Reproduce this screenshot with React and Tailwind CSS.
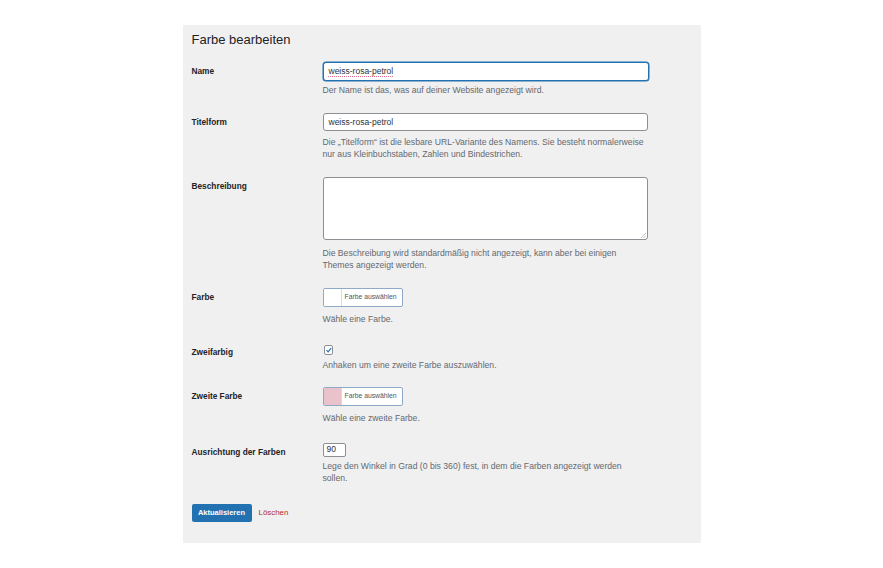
const font = { fontFamily: '"Liberation Sans", Arial, sans-serif' };

const Label = ({ children, className = '' }) => (
  <div className={`w-[131px] shrink-0 text-[8.3px] font-bold leading-[19px] text-[#1d2327] ${className}`}>
    {children}
  </div>
);

const Desc = ({ children, className = '' }) => (
  <p className={`text-[8.65px] leading-[12px] text-[#646970] ${className}`}>{children}</p>
);

const ColorButton = ({ swatch }) => (
  <button className="flex h-[18.5px] w-[80px] items-stretch overflow-hidden rounded-[2px] border border-[#8fa9c9] bg-white">
    <span className={`w-[18px] border-r border-[#d5dbe3] ${swatch}`}></span>
    <span className="flex flex-1 items-center pl-[3px] text-[6.8px] text-[#50575e]">Farbe auswählen</span>
  </button>
);

const App = () => {
  return (
    <div className="min-h-[568px] bg-white" style={font}>
      <div className="mx-auto mt-[25px] h-[518px] w-[518px] bg-[#f0f0f1] pl-[9px] pt-[6px]">
        <h1 className="text-[13px] leading-[17px] text-[#1d2327]">Farbe bearbeiten</h1>

        {/* Name */}
        <div className="mt-[14px] flex">
          <Label>Name</Label>
          <div>
            <div className="flex h-[19px] w-[326px] items-center rounded-[3px] border border-[#2271b1] bg-white pl-[5px] text-[8.5px] text-[#2c3338] shadow-[0_0_0_0.5px_#2271b1]">
              <span className="underline decoration-[#e06a8a] decoration-dotted underline-offset-2">weiss-rosa-petrol</span>
            </div>
            <Desc className="mt-[2.5px]">Der Name ist das, was auf deiner Website angezeigt wird.</Desc>
          </div>
        </div>

        {/* Titelform */}
        <div className="mt-[17.5px] flex">
          <Label>Titelform</Label>
          <div>
            <div className="flex h-[18px] w-[325px] items-center rounded-[3px] border border-[#8c8f94] bg-white pl-[5px] text-[8.5px] text-[#2c3338]">
              weiss-rosa-petrol
            </div>
            <Desc className="mt-[4.5px] w-[325px]">
              Die „Titelform“ ist die lesbare URL-Variante des Namens. Sie besteht normalerweise nur aus Kleinbuchstaben, Zahlen und Bindestrichen.
            </Desc>
          </div>
        </div>

        {/* Beschreibung */}
        <div className="mt-[17.5px] flex">
          <Label>Beschreibung</Label>
          <div>
            <div className="relative h-[63px] w-[325px] rounded-[3px] border border-[#8c8f94] bg-white">
              <svg className="absolute bottom-[1px] right-[1px]" width="5" height="5" viewBox="0 0 5 5">
                <path d="M5 0 L0 5 M5 2.5 L2.5 5" stroke="#9a9a9a" strokeWidth="0.6" />
              </svg>
            </div>
            <Desc className="mt-[7px] w-[322px]">
              Die Beschreibung wird standardmäßig nicht angezeigt, kann aber bei einigen Themes angezeigt werden.
            </Desc>
          </div>
        </div>

        {/* Farbe */}
        <div className="mt-[17px] flex">
          <Label>Farbe</Label>
          <div>
            <ColorButton swatch="bg-white" />
            <Desc className="mt-[6.5px]">Wähle eine Farbe.</Desc>
          </div>
        </div>

        {/* Zweifarbig */}
        <div className="mt-[17.5px] flex">
          <Label>Zweifarbig</Label>
          <div>
            <div className="ml-[1px] mt-[2.5px] flex h-[9.5px] w-[9.5px] items-center justify-center rounded-[2px] border border-[#8c8f94] bg-white">
              <svg width="8" height="8" viewBox="0 0 10 10">
                <path d="M2 5.2 L4.2 7.4 L8.3 2.4" fill="none" stroke="#2a6fb5" strokeWidth="1.6" />
              </svg>
            </div>
            <Desc className="mt-[4.5px]">Anhaken um eine zweite Farbe auszuwählen.</Desc>
          </div>
        </div>

        {/* Zweite Farbe */}
        <div className="mt-[16px] flex">
          <Label>Zweite Farbe</Label>
          <div>
            <ColorButton swatch="bg-[#e9c2cc]" />
            <Desc className="mt-[6.5px]">Wähle eine zweite Farbe.</Desc>
          </div>
        </div>

        {/* Ausrichtung */}
        <div className="mt-[18.5px] flex">
          <Label className="leading-[17px]">Ausrichtung der Farben</Label>
          <div>
            <div className="flex h-[14px] w-[23px] items-center rounded-[2px] border border-[#8c8f94] bg-white pl-[3px] text-[8.5px] text-[#2c3338]">
              90
            </div>
            <Desc className="mt-[3px] w-[310px]">
              Lege den Winkel in Grad (0 bis 360) fest, in dem die Farben angezeigt werden sollen.
            </Desc>
          </div>
        </div>

        <div className="mt-[20px] flex items-center">
          <button className="h-[18px] w-[60px] rounded-[2px] bg-[#2271b1] text-[7.5px] font-bold text-white">
            Aktualisieren
          </button>
          <span className="ml-[7px] text-[7.9px] text-[#b32d2e]">Löschen</span>
        </div>
      </div>
    </div>
  );
};

export default App;
